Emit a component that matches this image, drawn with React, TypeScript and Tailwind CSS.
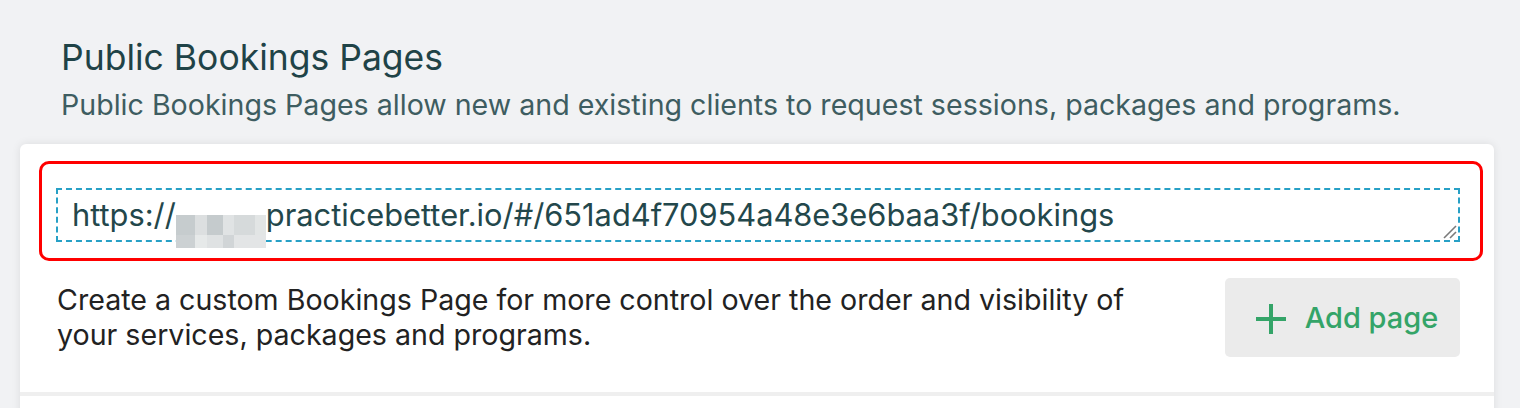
import React from "react";

const blocksTop = ["#c6ccce", "#dcdfe0", "#c5cbcd", "#e0e3e4", "#d6dadb", "#e2e5e5"];
const blocksBottom = ["#ccd1d3", "#e6e9e9", "#dfe2e3", "#d1d5d7", "#e3e5e6", "#e3e5e6"];
const widths = [19, 12, 16, 11, 21, 11];

function Mosaic() {
  return (
    <span className="inline-flex flex-col align-[-9px]">
      <span className="flex h-[20px]">
        {widths.map((w, i) => (
          <span key={i} className="h-full" style={{ width: w, background: blocksTop[i] }} />
        ))}
      </span>
      <span className="flex h-[13px]">
        {widths.map((w, i) => (
          <span key={i} className="h-full" style={{ width: w, background: blocksBottom[i] }} />
        ))}
      </span>
    </span>
  );
}

export default function App() {
  return (
    <div
      className="w-full min-h-[408px] h-[408px] overflow-hidden bg-[#f1f2f4]"
      style={{ fontFamily: "Inter, 'Noto Sans', sans-serif" }}
    >
      <div className="pl-[61px] pt-[36px]">
        <h1 className="text-[35.5px] leading-[44px] font-normal text-[#1f4347]">Public Bookings Pages</h1>
        <p className="mt-[7px] text-[28.6px] leading-[36px] text-[#3e5d61]">
          Public Bookings Pages allow new and existing clients to request sessions, packages and programs.
        </p>
      </div>
      <div className="mt-[21px] ml-[20px] mr-[26px] bg-white rounded-t-[6px] shadow-[0_0_10px_rgba(0,0,0,0.09)]">
        <div className="pt-[17px] pl-[19px] pr-[11px]">
          <div className="border-[3px] border-[#ff0000] rounded-[10px] pt-[24px] pl-[14px] pr-[20px] pb-[16px]">
            <div className="relative h-[54px] border-2 border-dashed border-[#27a0c6] pl-[14px] pt-[8px] text-[30.8px] leading-[34px] text-[#23474b] whitespace-nowrap">
              https://
              <Mosaic />
              practicebetter.io/#/651ad4f70954a48e3e6baa3f/bookings
              <svg
                className="absolute right-[1px] bottom-[1px]"
                width="16"
                height="16"
                viewBox="0 0 16 16"
              >
                <line x1="3" y1="15" x2="15" y2="3" stroke="#7a7a7a" strokeWidth="1.6" />
                <line x1="9" y1="15" x2="15" y2="9" stroke="#7a7a7a" strokeWidth="1.6" />
              </svg>
            </div>
          </div>
        </div>
        <div className="flex items-start justify-between pl-[37px] pr-[34px] pt-[17px] pb-[35px]">
          <p className="w-[1100px] mt-[4px] text-[28.6px] leading-[35px] text-[#222222]">
            Create a custom Bookings Page for more control over the order and visibility of your services, packages
            and programs.
          </p>
          <button className="w-[235px] h-[79px] flex items-center justify-center gap-[19px] pl-[9px] bg-[#ebebeb] rounded-[5px] text-[29px] text-[#34a468] font-medium">
            <svg width="30" height="30" viewBox="0 0 30 30" className="mt-[2px]">
              <line x1="15" y1="0" x2="15" y2="30" stroke="#34a468" strokeWidth="4" />
              <line x1="0" y1="15" x2="30" y2="15" stroke="#34a468" strokeWidth="4" />
            </svg>
            <span>Add page</span>
          </button>
        </div>
        <div className="h-[4px] bg-[#efefef]" />
        <div className="h-[20px] bg-white" />
      </div>
    </div>
  );
}
